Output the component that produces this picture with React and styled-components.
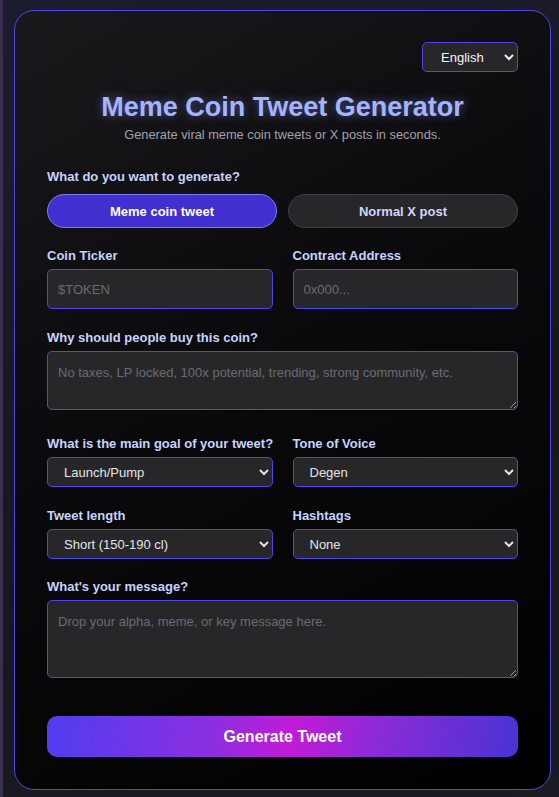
import React from 'react'
import styled, { createGlobalStyle } from 'styled-components'

const GlobalStyle = createGlobalStyle`
    html, body {
        margin: 0;
        padding: 0;
    }
    body {
        min-height: 797px;
        background: linear-gradient(160deg, #1c1c30 0%, #17171c 60%, #1b1b22 100%);
        font-family: "Liberation Sans", Arial, sans-serif;
        box-shadow: inset 3px 0 0 #3a2f4e;
    }
`

export default function App() {
    return (
        <>
            <GlobalStyle />
            <Page>
                <Card>
                    <TopBar>
                        <LangSelect defaultValue="en">
                            <option value="en">English</option>
                        </LangSelect>
                    </TopBar>
                    <Title>Meme Coin Tweet Generator</Title>
                    <Subtitle>Generate viral meme coin tweets or X posts in seconds.</Subtitle>

                    <Field gap={20}>
                        <Label>What do you want to generate?</Label>
                        <ToggleRow>
                            <Toggle active>Meme coin tweet</Toggle>
                            <Toggle>Normal X post</Toggle>
                        </ToggleRow>
                    </Field>

                    <Row>
                        <Field>
                            <Label>Coin Ticker</Label>
                            <Input placeholder="$TOKEN" />
                        </Field>
                        <Field>
                            <Label>Contract Address</Label>
                            <Input placeholder="0x000..." />
                        </Field>
                    </Row>

                    <Field gap={26}>
                        <Label>Why should people buy this coin?</Label>
                        <TextArea height={59} placeholder="No taxes, LP locked, 100x potential, trending, strong community, etc." />
                    </Field>

                    <Row>
                        <Field>
                            <Label>What is the main goal of your tweet?</Label>
                            <Select defaultValue="launch">
                                <option value="launch">Launch/Pump</option>
                            </Select>
                        </Field>
                        <Field>
                            <Label>Tone of Voice</Label>
                            <Select defaultValue="degen">
                                <option value="degen">Degen</option>
                            </Select>
                        </Field>
                    </Row>

                    <Row>
                        <Field gap={20}>
                            <Label>Tweet length</Label>
                            <Select defaultValue="short">
                                <option value="short">Short (150-190 cl)</option>
                            </Select>
                        </Field>
                        <Field gap={20}>
                            <Label>Hashtags</Label>
                            <Select defaultValue="none">
                                <option value="none">None</option>
                            </Select>
                        </Field>
                    </Row>

                    <Field gap={38}>
                        <Label>What's your message?</Label>
                        <TextArea height={78} placeholder="Drop your alpha, meme, or key message here." />
                    </Field>

                    <GenerateButton>Generate Tweet</GenerateButton>
                </Card>
            </Page>
        </>
    )
}

const Page = styled.div`
    padding: 10px 8px 7px 14px;
`
const Card = styled.div`
    box-sizing: border-box;
    border: 1px solid #4f46e5;
    border-radius: 20px;
    background: linear-gradient(150deg, #19191b 0%, #0a0a0c 45%, #000 100%);
    padding: 31px 32px 32px;
    display: flex;
    flex-direction: column;
`
const TopBar = styled.div`
    display: flex;
    justify-content: flex-end;
`
const LangSelect = styled.select`
    width: 96px;
    height: 30px;
    background: #27272a;
    color: #f4f4f5;
    border: 1px solid #4f46e5;
    border-radius: 5px;
    font-family: "Liberation Sans", Arial, sans-serif;
    font-size: 13px;
    padding: 0 8px 0 14px;
    color-scheme: dark;
`
const Title = styled.h1`
    margin: 19px 0 0;
    text-align: center;
    font-size: 27px;
    line-height: 32px;
    font-weight: 700;
    color: #a5b4fc;
    text-shadow: 0 0 10px rgba(129, 140, 248, 0.55);
`
const Subtitle = styled.p`
    margin: 4px 0 26px;
    text-align: center;
    font-size: 12.8px;
    line-height: 16px;
    color: #a1a1aa;
`
const Field = styled.div`
    display: flex;
    flex-direction: column;
    min-width: 0;
    margin-bottom: ${props => props.gap || 21}px;
`
const Row = styled.div`
    display: grid;
    grid-template-columns: 1fr 1fr;
    column-gap: 20px;
`
const Label = styled.label`
    font-size: 13px;
    line-height: 16px;
    font-weight: 700;
    color: #c7d2fe;
    margin-bottom: 5px;
    white-space: nowrap;
`
const ToggleRow = styled.div`
    display: grid;
    grid-template-columns: 1fr 1fr;
    column-gap: 11px;
    margin-top: 4px;
`
const Toggle = styled.button`
    height: 34px;
    border-radius: 17px;
    font-family: "Liberation Sans", Arial, sans-serif;
    font-size: 13px;
    font-weight: 700;
    background: ${props => props.active ? '#4130cf' : '#27272a'};
    border: 1px solid ${props => props.active ? '#7c7cf7' : '#3f3f46'};
    color: ${props => props.active ? '#ffffff' : '#d4d4f8'};
`
const Input = styled.input`
    box-sizing: border-box;
    height: 40px;
    background: #27272a;
    border: 1px solid #4f46e5;
    border-radius: 5px;
    padding: 0 10px;
    color: #e4e4e7;
    font-family: "Liberation Sans", Arial, sans-serif;
    font-size: 13px;
    &::placeholder {
        color: #6b6b73;
    }
`
const TextArea = styled.textarea`
    box-sizing: border-box;
    height: ${props => props.height}px;
    background: #27272a;
    border: 1px solid #4f46e5;
    border-radius: 5px;
    padding: 13px 10px;
    color: #e4e4e7;
    font-family: "Liberation Sans", Arial, sans-serif;
    font-size: 13px;
    resize: vertical;
    color-scheme: dark;
    &::placeholder {
        color: #6b6b73;
    }
`
const Select = styled.select`
    box-sizing: border-box;
    height: 30px;
    background: #27272a;
    border: 1px solid #4f46e5;
    border-radius: 5px;
    padding: 0 6px 0 12px;
    color: #e4e4e7;
    font-family: "Liberation Sans", Arial, sans-serif;
    font-size: 13px;
    color-scheme: dark;
`
const GenerateButton = styled.button`
    height: 41px;
    border: none;
    border-radius: 10px;
    background: linear-gradient(100deg, #4f3df0 0%, #8b2fe0 35%, #c21bd6 52%, #8a2bd6 70%, #4a33d4 100%);
    color: #ffffff;
    font-family: "Liberation Sans", Arial, sans-serif;
    font-size: 16px;
    font-weight: 700;
`
